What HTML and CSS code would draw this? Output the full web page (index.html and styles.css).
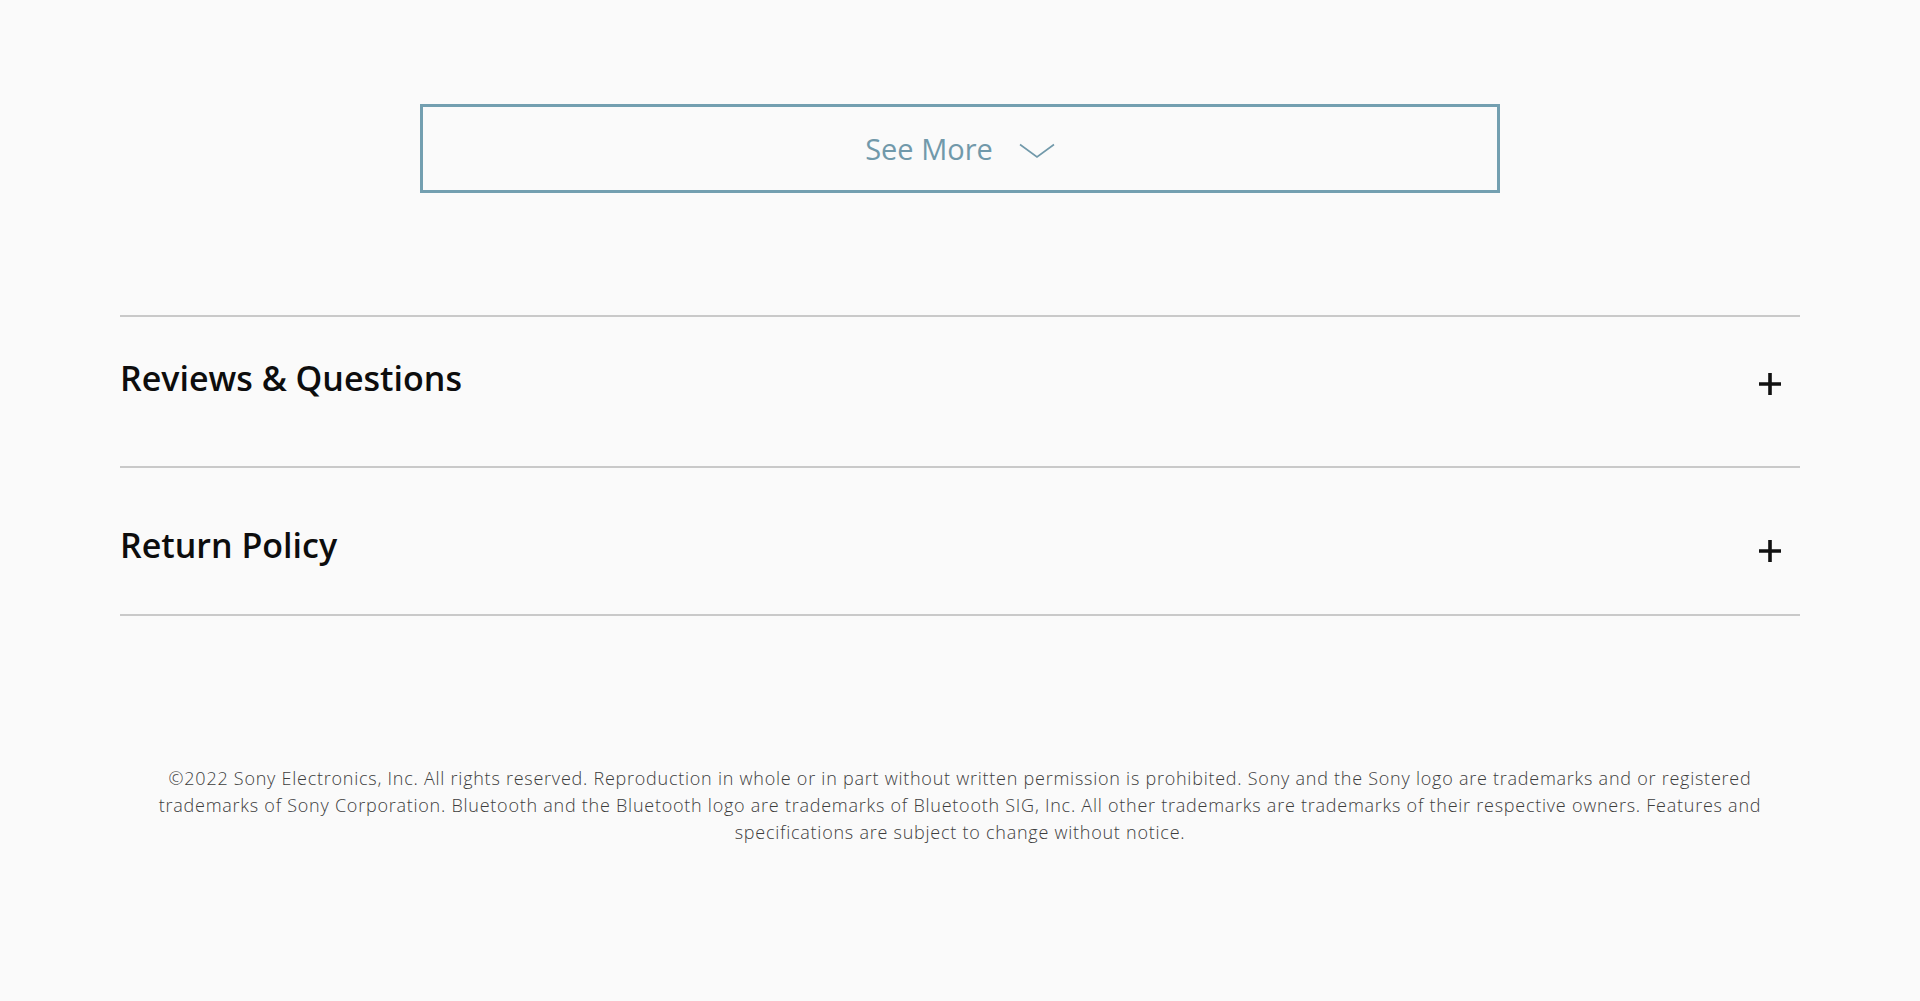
FILE: index.html
```html
<!DOCTYPE html>
<html lang="en">
<head>
    <meta charset="UTF-8">
    <meta name="viewport" content="width=device-width, initial-scale=1.0">
    <title>Product Details</title>
    <link rel="stylesheet" href="styles.css">
</head>
<body>
    <main class="page">
        <div class="see-more-row">
            <button class="see-more">
                <span>See More</span>
                <svg class="chevron" width="36" height="16" viewBox="0 0 36 16">
                    <polyline points="1,1.5 18,14 35,1.5" fill="none" stroke="currentColor" stroke-width="1.6"/>
                </svg>
            </button>
        </div>

        <section class="accordion">
            <div class="accordion-item first">
                <h2>Reviews &amp; Questions</h2>
                <svg class="plus" width="24" height="24" viewBox="0 0 24 24">
                    <path d="M12 1v22M1 12h22" stroke="currentColor" stroke-width="3.6"/>
                </svg>
            </div>
            <div class="accordion-item second">
                <h2>Return Policy</h2>
                <svg class="plus" width="24" height="24" viewBox="0 0 24 24">
                    <path d="M12 1v22M1 12h22" stroke="currentColor" stroke-width="3.6"/>
                </svg>
            </div>
        </section>

        <footer class="legal">
            <p>©2022 Sony Electronics, Inc. All rights reserved. Reproduction in whole or in part without written permission is prohibited. Sony and the Sony logo are trademarks and or registered trademarks of Sony Corporation. Bluetooth and the Bluetooth logo are trademarks of Bluetooth SIG, Inc. All other trademarks are trademarks of their respective owners. Features and specifications are subject to change without notice.</p>
        </footer>
    </main>
</body>
</html>
```

FILE: styles.css
```css
/* Base */
* {
    box-sizing: border-box;
    margin: 0;
    padding: 0;
}

body {
    background-color: #fafafa;
    font-family: "Open Sans", "Noto Sans", sans-serif;
    color: #111;
}

.page {
    width: 1680px;
    margin: 0 auto;
    padding-top: 104px;
}

/* See more button */
.see-more-row {
    display: flex;
    justify-content: center;
}

.see-more {
    width: 1080px;
    height: 89px;
    display: flex;
    align-items: center;
    justify-content: center;
    gap: 26px;
    background: transparent;
    border: 3px solid #739fb0;
    color: #7199aa;
    font-family: "Open Sans", "Noto Sans", sans-serif;
    font-size: 29px;
    cursor: pointer;
}

.chevron {
    display: block;
    margin-top: 4px;
}

/* Accordion */
.accordion {
    margin-top: 122px;
}

.accordion-item {
    display: flex;
    align-items: center;
    justify-content: space-between;
    border-top: 2px solid #c9c9c9;
}

.accordion-item.first {
    padding: 41px 18px 67px 0;
}

.accordion-item.second {
    padding: 57px 18px 48px 0;
    border-bottom: 2px solid #c9c9c9;
}

.accordion-item h2 {
    font-size: 34px;
    font-weight: 600;
    line-height: 1.2;
    color: #0d0d0d;
}

.plus {
    display: block;
    color: #111;
    margin-top: 12px;
}

/* Legal footer */
.legal {
    margin-top: 149px;
    padding: 0 24px;
    text-align: center;
}

.legal p {
    font-size: 18px;
    font-weight: 300;
    line-height: 27px;
    letter-spacing: 0.75px;
    color: #3d3d3d;
}
```
